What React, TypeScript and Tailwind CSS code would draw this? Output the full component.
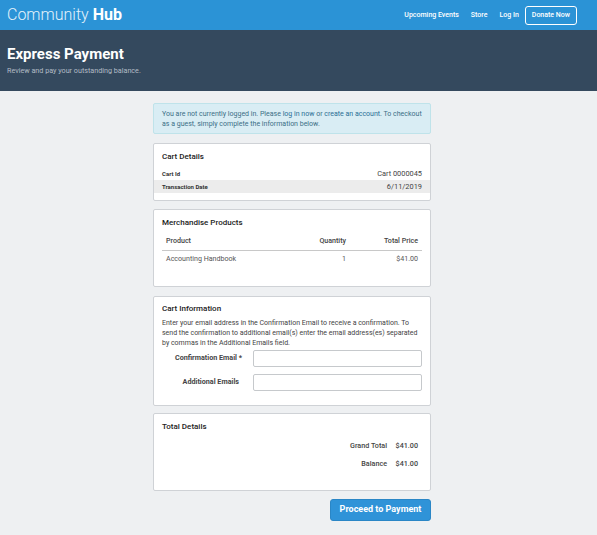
import React from 'react'

const font = { fontFamily: 'Roboto, "Liberation Sans", sans-serif' }

const Card: React.FC<{ title: string; className?: string; children: React.ReactNode }> = ({ title, className = '', children }) => (
  <div className={`bg-white border border-[#cfd2d6] rounded-[2px] ${className}`}>
    <h3 className="px-[8px] text-[8px] leading-[12px] font-medium text-[#222]">{title}</h3>
    {children}
  </div>
)

export default function App() {
  return (
    <div className="min-h-[535px] bg-[#eef0f2] text-[#333]" style={font}>
      {/* top nav */}
      <nav className="h-[30px] bg-[#2b93d6] flex items-center justify-between pl-[7px] pr-[20px]">
        <div className="text-[16px] leading-none text-white">
          <span className="font-light text-[#e4f2fb]">Community</span> <span className="font-bold">Hub</span>
        </div>
        <div className="flex items-center text-[7px] font-medium text-white">
          <a className="mr-[12px]">Upcoming Events</a>
          <a className="mr-[12px]">Store</a>
          <a className="mr-[6px]">Log In</a>
          <a className="h-[19px] px-[6px] flex items-center border border-white rounded-[3px]">Donate Now</a>
        </div>
      </nav>

      {/* page banner */}
      <header className="h-[61px] bg-[#34495e] px-[7px] pt-[14px]">
        <h1 className="text-[15px] leading-[20px] font-bold text-white">Express Payment</h1>
        <p className="mt-[2px] text-[7.2px] text-[#b3bcc6]">Review and pay your outstanding balance.</p>
      </header>

      <main className="w-[278px] ml-[153px] pt-[12px] pb-[15px] flex flex-col">
        <div className="h-[31px] bg-[#d9edf4] border border-[#bfe3ea] rounded-[2px] px-[8px] pt-[5px] text-[7px] leading-[10px] text-[#3b6f86]">
          You are not currently logged in. Please <a className="text-[#2a6f95]">log in now</a> or{' '}
          <a className="text-[#2a6f95]">create an account</a>. To checkout as a guest, simply complete the information below.
        </div>

        <Card title="Cart Details" className="mt-[9px] pt-[7px] pb-[7px]">
          <div className="mt-[4px]">
            <div className="h-[13px] px-[8px] flex items-center justify-between">
              <span className="font-bold text-[6px]">Cart Id</span>
              <span className="text-[7.4px] text-[#444]">Cart 0000045</span>
            </div>
            <div className="h-[13px] px-[8px] flex items-center justify-between bg-[#ececec]">
              <span className="font-bold text-[6px]">Transaction Date</span>
              <span className="text-[7.4px] text-[#444]">6/11/2019</span>
            </div>
          </div>
        </Card>

        <Card title="Merchandise Products" className="mt-[8px] pt-[7px] pb-[18px]">
          <div className="mx-[8px] mt-[3px] text-[7.1px]">
            <div className="h-[19px] px-[4px] flex items-center border-b border-[#c8c8c8] font-medium text-[#444]">
              <span className="flex-1">Product</span>
              <span className="w-[60px] text-right">Quantity</span>
              <span className="w-[72px] text-right">Total Price</span>
            </div>
            <div className="h-[17px] px-[4px] flex items-center text-[#555]">
              <span className="flex-1">Accounting Handbook</span>
              <span className="w-[60px] text-right">1</span>
              <span className="w-[72px] text-right">$41.00</span>
            </div>
          </div>
        </Card>

        <Card title="Cart Information" className="mt-[9px] pt-[6px] pb-[14px]">
          <p className="px-[8px] mt-[3px] text-[7px] leading-[10px] text-[#444]">
            Enter your email address in the Confirmation Email to receive a confirmation. To send the confirmation to additional email(s) enter the email address(es) separated by commas in the Additional Emails field.
          </p>
          <div className="mt-[2px] px-[8px] flex flex-col gap-[7px] text-[7.2px] font-bold text-[#444]">
            <label className="flex items-center">
              <span className="w-[81px] text-right pr-[1px]">Confirmation Email *</span>
              <input className="ml-[10px] flex-1 h-[17px] border border-[#c6c9cc] rounded-[2px] bg-white" />
            </label>
            <label className="flex items-center">
              <span className="w-[77px] text-right">Additional Emails</span>
              <input className="ml-[14px] flex-1 h-[17px] border border-[#c6c9cc] rounded-[2px] bg-white" />
            </label>
          </div>
        </Card>

        <Card title="Total Details" className="mt-[7px] pt-[7px] pb-[20px]">
          <div className="mt-[7px] flex flex-col gap-[6px] pr-[12px] text-[7.2px] font-medium text-[#444]">
            <div className="h-[12px] flex items-center justify-end">
              <span>Grand Total</span>
              <span className="w-[31px] text-right">$41.00</span>
            </div>
            <div className="h-[12px] flex items-center justify-end">
              <span>Balance</span>
              <span className="w-[31px] text-right">$41.00</span>
            </div>
          </div>
        </Card>

        <div className="mt-[8px] flex justify-end">
          <button className="h-[22px] w-[101px] bg-[#2f93d8] border border-[#2a86c6] rounded-[3px] text-[9px] font-bold text-white">
            Proceed to Payment
          </button>
        </div>
      </main>
    </div>
  )
}
